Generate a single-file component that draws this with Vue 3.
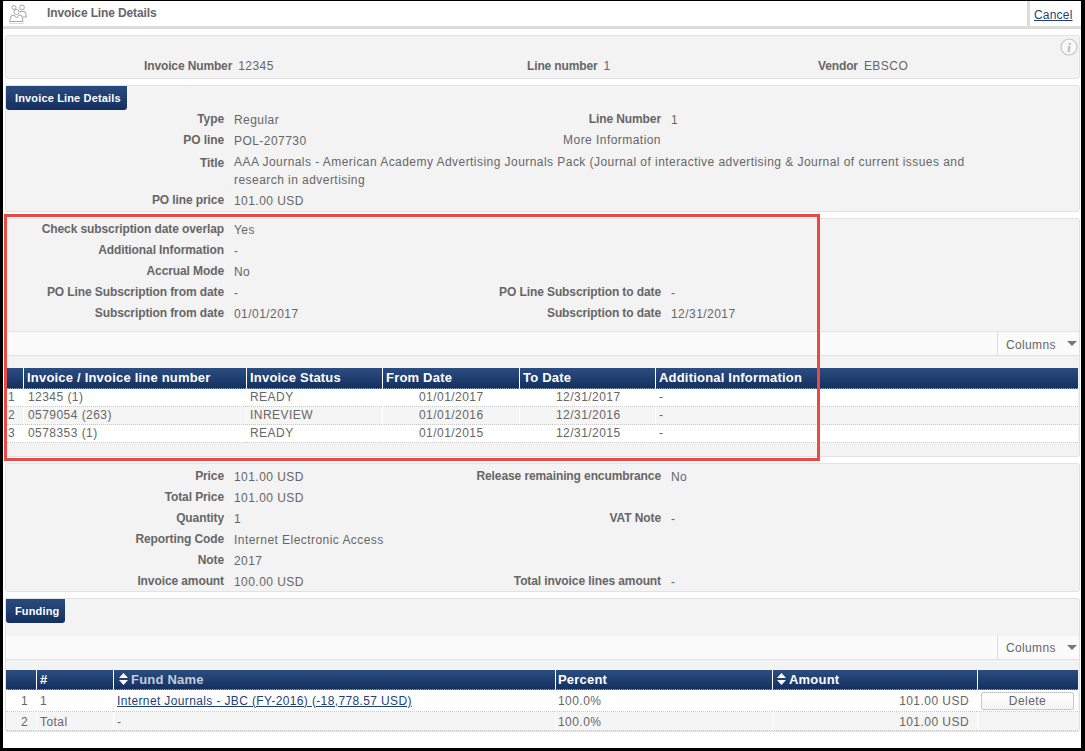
<script setup>
const headerFields = [
  { label: 'Invoice Number', value: '12345' },
  { label: 'Line number', value: '1' },
  { label: 'Vendor', value: 'EBSCO' },
]

const detailRows = [
  { label: 'Type', value: 'Regular', label2: 'Line Number', value2: '1' },
  { label: 'PO line', value: 'POL-207730', label2: 'More Information', plain2: true },
  {
    label: 'Title',
    wide: true,
    value:
      'AAA Journals - American Academy Advertising Journals Pack (Journal of interactive advertising & Journal of current issues and research in advertising',
  },
  { label: 'PO line price', value: '101.00 USD' },
]

const subRows = [
  { label: 'Check subscription date overlap', value: 'Yes' },
  { label: 'Additional Information', value: '-' },
  { label: 'Accrual Mode', value: 'No' },
  { label: 'PO Line Subscription from date', value: '-', label2: 'PO Line Subscription to date', value2: '-' },
  { label: 'Subscription from date', value: '01/01/2017', label2: 'Subscription to date', value2: '12/31/2017' },
]

const priceRows = [
  { label: 'Price', value: '101.00 USD', label2: 'Release remaining encumbrance', value2: 'No' },
  { label: 'Total Price', value: '101.00 USD' },
  { label: 'Quantity', value: '1', label2: 'VAT Note', value2: '-' },
  { label: 'Reporting Code', value: 'Internet Electronic Access' },
  { label: 'Note', value: '2017' },
  { label: 'Invoice amount', value: '100.00 USD', label2: 'Total invoice lines amount', value2: '-' },
]

const invoiceCols = [16, 223, 136, 137, 136, 423]
const invoiceHead = ['', 'Invoice / Invoice line number', 'Invoice Status', 'From Date', 'To Date', 'Additional Information']
const invoiceRows = [
  ['1', '12345 (1)', 'READY', '01/01/2017', '12/31/2017', '-'],
  ['2', '0579054 (263)', 'INREVIEW', '01/01/2016', '12/31/2016', '-'],
  ['3', '0578353 (1)', 'READY', '01/01/2015', '12/31/2015', '-'],
]

const fundCols = [30, 77, 442, 217, 205, 101]
</script>

<template>
  <div class="frame">
    <header class="top">
      <svg class="top-icon" width="26" height="24" viewBox="0 0 26 24" fill="none" stroke="#a8a8a8" stroke-width="1">
        <circle cx="9" cy="5.5" r="2" />
        <circle cx="17" cy="5.5" r="2.4" />
        <circle cx="11.5" cy="10" r="2.6" />
        <path d="M4.5 19.5l1.5-5.5 3-1 2.5 3 2.5-3 3 1 1 5.5z" />
        <path d="M15 9.5h5l1.5 5.5h-3.5" />
        <path d="M4 21.5h15" stroke="#dedede" />
      </svg>
      <span class="top-title">Invoice Line Details</span>
      <a class="cancel">Cancel</a>
    </header>

    <main class="content">
      <section class="panel head-panel">
        <div v-for="f in headerFields" :key="f.label" class="head-field">
          <b>{{ f.label }}</b><span>{{ f.value }}</span>
        </div>
        <svg class="info" width="18" height="18" viewBox="0 0 18 18">
          <circle cx="9" cy="9" r="8" fill="#f8f8f8" stroke="#c4c4c4" stroke-width="1.2" />
          <text x="9" y="13.5" text-anchor="middle" class="info-i">i</text>
        </svg>
      </section>

      <section class="panel detail-panel">
        <div class="tab">Invoice Line Details</div>
        <div class="fields">
          <div v-for="r in detailRows" :key="r.label" class="row" :class="{ wide: r.wide }">
            <label>{{ r.label }}</label>
            <span class="val">{{ r.value }}</span>
            <template v-if="r.label2">
              <label :class="{ plain: r.plain2 }">{{ r.label2 }}</label>
              <span class="val">{{ r.value2 }}</span>
            </template>
          </div>
        </div>
      </section>

      <section class="panel sub-panel">
        <div class="fields">
          <div v-for="r in subRows" :key="r.label" class="row">
            <label>{{ r.label }}</label>
            <span class="val">{{ r.value }}</span>
            <template v-if="r.label2">
              <label>{{ r.label2 }}</label>
              <span class="val">{{ r.value2 }}</span>
            </template>
          </div>
        </div>
        <div class="toolbar">
          <div class="columns">Columns<i class="caret"></i></div>
        </div>
        <table class="grid invoice">
          <colgroup>
            <col v-for="(w, i) in invoiceCols" :key="i" :style="{ width: w + 'px' }" />
          </colgroup>
          <thead>
            <tr>
              <th v-for="(h, i) in invoiceHead" :key="i">{{ h }}</th>
            </tr>
          </thead>
          <tbody>
            <tr v-for="row in invoiceRows" :key="row[0]">
              <td v-for="(c, i) in row" :key="i" :class="{ num: i === 0, first: i === 1, date: i === 3 || i === 4 }">{{ c }}</td>
            </tr>
          </tbody>
        </table>
      </section>

      <section class="panel price-panel">
        <div class="fields">
          <div v-for="r in priceRows" :key="r.label" class="row">
            <label>{{ r.label }}</label>
            <span class="val">{{ r.value }}</span>
            <template v-if="r.label2">
              <label>{{ r.label2 }}</label>
              <span class="val">{{ r.value2 }}</span>
            </template>
          </div>
        </div>
      </section>

      <section class="panel fund-panel">
        <div class="tab">Funding</div>
        <div class="toolbar fund-toolbar">
          <div class="columns">Columns<i class="caret"></i></div>
        </div>
        <table class="grid fund">
          <colgroup>
            <col v-for="(w, i) in fundCols" :key="i" :style="{ width: w + 'px' }" />
          </colgroup>
          <thead>
            <tr>
              <th></th>
              <th>#</th>
              <th class="fund-name">
                <svg class="sort" width="9" height="12" viewBox="0 0 9 12"><path d="M0 5L4.5 0 9 5zM0 7h9l-4.5 5z" fill="#fff" /></svg><span class="dim">Fund Name</span>
              </th>
              <th class="pct">Percent</th>
              <th class="amount-head">
                <svg class="sort" width="9" height="12" viewBox="0 0 9 12"><path d="M0 5L4.5 0 9 5zM0 7h9l-4.5 5z" fill="#fff" /></svg>Amount
              </th>
              <th></th>
            </tr>
          </thead>
          <tbody>
            <tr>
              <td class="idx">1</td>
              <td>1</td>
              <td><a class="link">Internet Journals - JBC (FY-2016) (-18,778.57 USD)</a></td>
              <td class="pct">100.0%</td>
              <td class="amount">101.00 USD</td>
              <td class="action"><button class="del">Delete</button></td>
            </tr>
            <tr>
              <td class="idx">2</td>
              <td>Total</td>
              <td>-</td>
              <td class="pct">100.0%</td>
              <td class="amount">101.00 USD</td>
              <td></td>
            </tr>
          </tbody>
        </table>
      </section>
    </main>

    <div class="highlight"></div>
  </div>
</template>

<style scoped>
.frame {
  position: relative;
  width: 1085px;
  height: 751px;
  box-sizing: border-box;
  border-style: solid;
  border-color: #000;
  border-width: 1px 4px 3px 3px;
  background: #fff;
  overflow: hidden;
  font-family: "Liberation Sans", Arial, sans-serif;
  font-size: 12px;
  color: #666;
}

.top {
  height: 25px;
  display: flex;
  align-items: center;
  border-bottom: 3px solid #dcdcdc;
  padding-left: 2px;
}

.top-icon {
  flex: none;
}

.top-title {
  margin-left: 16px;
  margin-top: -2px;
  font-weight: bold;
  letter-spacing: -0.13px;
  color: #666;
}

.cancel {
  margin-left: auto;
  align-self: stretch;
  width: 54px;
  box-sizing: border-box;
  border-left: 3px solid #dcdcdc;
  padding: 7px 0 0 4px;
  letter-spacing: 0.2px;
  color: #1f3f77;
  text-decoration: underline;
}

.content {
  padding: 6px 1px 0 2px;
  display: flex;
  flex-direction: column;
  gap: 6px;
}

.panel {
  background: #f3f3f3;
  border: 1px solid #e2e2e2;
  border-radius: 3px;
}

.head-panel {
  position: relative;
  height: 44px;
  box-sizing: border-box;
  display: grid;
  grid-template-columns: 383px 291px 1fr;
  padding-left: 138px;
}

.head-field {
  padding-top: 23px;
  white-space: nowrap;
}

.head-field b {
  color: #666;
  margin-right: 6px;
  letter-spacing: -0.13px;
}

.head-field span {
  letter-spacing: 0.45px;
}

.info {
  position: absolute;
  right: 1px;
  top: 2px;
}

.info-i {
  font-family: "Liberation Serif", serif;
  font-style: italic;
  font-weight: bold;
  font-size: 13px;
  fill: #b5b5b5;
}

.detail-panel {
  height: 127px;
  box-sizing: border-box;
}

.tab {
  width: max-content;
  height: 24px;
  line-height: 24px;
  padding: 0 6px 0 9px;
  background: linear-gradient(#2a4a7f, #14305f);
  border-radius: 0 0 3px 3px;
  color: #fff;
  font-size: 11px;
  font-weight: bold;
  letter-spacing: 0.15px;
}

.row {
  display: grid;
  grid-template-columns: 218px 218px 219px 1fr;
  min-height: 21px;
  line-height: 21px;
}

.row label {
  text-align: right;
  font-weight: bold;
  letter-spacing: -0.1px;
  line-height: 19px;
  color: #666;
  white-space: nowrap;
}

.row label:nth-child(3) {
  grid-column: 3;
  justify-self: end;
}

.row label.plain {
  font-weight: normal;
  letter-spacing: 0.45px;
}

.val {
  padding-left: 10px;
  letter-spacing: 0.45px;
  color: #666;
}

.row label:nth-child(3) + .val {
  grid-column: 4;
}

.row.wide {
  grid-template-columns: 218px 750px;
  line-height: 18px;
  padding: 1px 0 2px;
}

.row.wide label {
  line-height: 20px;
}

.sub-panel {
  height: 239px;
  box-sizing: border-box;
  padding-top: 1px;
}

.price-panel {
  height: 129px;
  box-sizing: border-box;
  padding-top: 3px;
}

.toolbar {
  margin-top: 6px;
  height: 25px;
  box-sizing: border-box;
  background: #fbfbfb;
  border-top: 1px solid #e2e2e2;
  border-bottom: 1px solid #dde1e4;
  display: flex;
  justify-content: flex-end;
}

.fund-toolbar {
  margin-top: 13px;
  height: 24px;
  border-top: 0;
}

.columns {
  width: 82px;
  box-sizing: border-box;
  border-left: 1px solid #dcdcdc;
  padding-left: 8px;
  line-height: 27px;
  letter-spacing: 0.35px;
  position: relative;
}

.fund-toolbar .columns {
  line-height: 24px;
}

.caret {
  position: absolute;
  right: 2px;
  top: 9px;
  border-style: solid;
  border-width: 5px 5px 0 5px;
  border-color: #777 transparent transparent;
}

.grid {
  table-layout: fixed;
  border-collapse: separate;
  border-spacing: 0;
  margin: 12px 0 0 1px;
  width: 1071px;
  background: #fff;
}

.fund {
  margin: 10px 0 0 0;
  width: 1072px;
}

.grid th {
  height: 21px;
  padding: 0 0 0 3px;
  box-sizing: border-box;
  background: linear-gradient(#2c4d82, #14305f);
  color: #fff;
  font-size: 13px;
  font-weight: bold;
  letter-spacing: 0.2px;
  text-align: left;
  white-space: nowrap;
  border-left: 1px solid #fff;
  border-bottom: 1px dotted #8a9bb5;
  line-height: 20px;
}

.grid.fund th {
  height: 20px;
  padding-top: 1px;
  line-height: 18px;
}

.grid th:first-child {
  border-left: 0;
}

.grid td {
  height: 18px;
  padding: 0 0 0 3px;
  box-sizing: border-box;
  border-left: 1px solid #fff;
  border-bottom: 1px dotted #c8c8c8;
  line-height: 17px;
  letter-spacing: 0.45px;
  color: #666;
  white-space: nowrap;
}

.grid td:first-child {
  border-left: 0;
}

.grid tbody tr:nth-child(even) td {
  background: #f5f5f5;
}

.invoice td.num {
  padding-left: 1px;
}

.invoice td.first {
  padding-left: 4px;
}

.invoice td.date {
  padding-left: 36px;
}

.fund td {
  height: 22px;
  line-height: 20px;
}

.fund tr:last-child td {
  height: 18px;
  padding-top: 2px;
  line-height: 16px;
}

.fund td.idx {
  text-align: right;
  padding-right: 8px;
}

.fund td.amount {
  text-align: right;
  padding-right: 8px;
}

.fund td.action {
  padding: 1px 0 0 3px;
}

.grid .pct {
  padding-left: 2px;
}

.grid th.fund-name {
  padding-left: 5px;
}

.grid th.amount-head {
  padding-left: 4px;
}

.del {
  display: block;
  width: 93px;
  height: 18px;
  padding: 0;
  font: 12px "Liberation Sans", Arial, sans-serif;
  letter-spacing: 0.45px;
  color: #666;
  background: linear-gradient(#fff, #f4f4f4);
  border: 1px solid #c8c8c8;
  border-radius: 2px;
}

.link {
  color: #1f3f77;
  letter-spacing: 0.37px;
  text-decoration: underline;
}

.dim {
  color: #c4cbd8;
}

.sort {
  margin-right: 3px;
  vertical-align: -1px;
}

.highlight {
  position: absolute;
  left: 1px;
  top: 213px;
  width: 816px;
  height: 247px;
  box-sizing: border-box;
  border: 3px solid #ea4a45;
  pointer-events: none;
}
</style>

<style>
html, body {
  margin: 0;
  background: #fff;
}
</style>
